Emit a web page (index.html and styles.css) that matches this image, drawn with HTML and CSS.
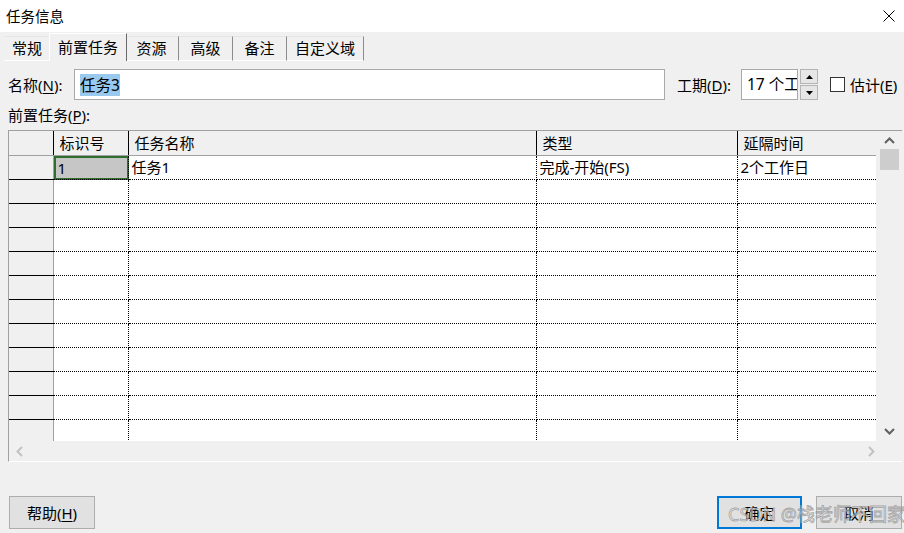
FILE: index.html
```html
<!DOCTYPE html>
<html lang="zh-CN">
<head>
    <meta charset="UTF-8">
    <title>任务信息</title>
    <link rel="stylesheet" href="styles.css">
</head>
<body>
    <div class="titlebar">
        <span class="title">任务信息</span>
        <svg class="close-icon" width="12" height="12" viewBox="0 0 12 12">
            <path d="M0.5 0.5 L11.5 11.5 M11.5 0.5 L0.5 11.5" stroke="#000" stroke-width="1" fill="none"/>
        </svg>
    </div>

    <div class="tabs">
        <div class="tab">常规</div>
        <div class="tab active">前置任务</div>
        <div class="tab">资源</div>
        <div class="tab">高级</div>
        <div class="tab">备注</div>
        <div class="tab">自定义域</div>
    </div>

    <div class="name-row">
        <span class="field-label">名称(<u>N</u>):</span>
        <div class="name-input"><span class="sel">任务3</span></div>
        <span class="dur-label">工期(<u>D</u>):</span>
        <div class="dur-input">17 个工作日</div>
        <div class="spin">
            <div class="spin-btn">
                <svg width="7" height="4" viewBox="0 0 7 4"><path d="M0 4 L3.5 0 L7 4 Z" fill="#000"/></svg>
            </div>
            <div class="spin-btn">
                <svg width="7" height="4" viewBox="0 0 7 4"><path d="M0 0 L3.5 4 L7 0 Z" fill="#000"/></svg>
            </div>
        </div>
        <span class="checkbox"></span>
        <span class="check-label">估计(<u>E</u>)</span>
    </div>

    <div class="grid-label">前置任务(<u>P</u>):</div>

    <div class="grid-box">
        <div class="grid-main">
            <div class="table-wrap">
                <table class="pred-table">
                    <colgroup>
                        <col class="c-row">
                        <col class="c-id">
                        <col class="c-name">
                        <col class="c-type">
                        <col class="c-lag">
                    </colgroup>
                    <thead>
                        <tr>
                            <th class="row-head"></th>
                            <th>标识号</th>
                            <th>任务名称</th>
                            <th>类型</th>
                            <th>延隔时间</th>
                        </tr>
                    </thead>
                    <tbody id="rows">
                        <tr>
                            <td class="row-head"></td>
                            <td class="current"><div class="cell-focus">1</div></td>
                            <td>任务1</td>
                            <td>完成-开始(FS)</td>
                            <td>2个工作日</td>
                        </tr>
                    </tbody>
                </table>
            </div>
            <div class="vscroll">
                <svg width="11" height="7" viewBox="0 0 11 7"><path d="M1 6 L5.5 1.5 L10 6" stroke="#606060" stroke-width="2" fill="none"/></svg>
                <div class="thumb"></div>
                <div class="vspace"></div>
                <svg width="11" height="7" viewBox="0 0 11 7"><path d="M1 1 L5.5 5.5 L10 1" stroke="#606060" stroke-width="2" fill="none"/></svg>
            </div>
        </div>
        <div class="hscroll">
            <svg width="7" height="11" viewBox="0 0 7 11"><path d="M6 1 L1.5 5.5 L6 10" stroke="#c2c2c2" stroke-width="2" fill="none"/></svg>
            <svg width="7" height="11" viewBox="0 0 7 11"><path d="M1 1 L5.5 5.5 L1 10" stroke="#c2c2c2" stroke-width="2" fill="none"/></svg>
        </div>
    </div>

    <div class="footer">
        <button class="btn">帮助(<u>H</u>)</button>
        <div class="btn-group">
            <button class="btn default">确定</button>
            <button class="btn">取消</button>
        </div>
    </div>

    <div class="watermark">CSDN @栈老师不回家</div>

    <script>
        // 补齐空行
        const rows = document.getElementById('rows');
        for (let i = 0; i < 11; i++) {
            const tr = document.createElement('tr');
            tr.innerHTML = '<td class="row-head"></td><td></td><td></td><td></td><td></td>';
            rows.appendChild(tr);
        }
    </script>
</body>
</html>
```

FILE: styles.css
```css
* {
    box-sizing: border-box;
}
html, body {
    margin: 0;
    padding: 0;
}
body {
    width: 904px;
    height: 533px;
    overflow: hidden;
    position: relative;
    background-color: #f0f0f0;
    font-family: "Noto Sans", "Noto Sans CJK SC", sans-serif;
    font-size: 15px;
    color: #000;
}
u {
    text-underline-offset: 2px;
}
.titlebar {
    height: 32px;
    background-color: #fff;
    display: flex;
    align-items: center;
    justify-content: space-between;
    padding: 0 9px 0 6px;
}
.title {
    font-size: 14.5px;
    line-height: 20px;
}
.tabs {
    display: flex;
    align-items: flex-end;
    height: 29px;
    padding-left: 4px;
}
.tab {
    height: 25px;
    line-height: 23px;
    padding: 0 8px;
    text-align: center;
    border-right: 1px solid #8c8c8c;
    border-top: 1px solid #e6e6e6;
    border-bottom: 1px solid #fff;
}
.tab + .tab {
    min-width: 54px;
}
.tab.active {
    position: relative;
    z-index: 1;
    height: 28px;
    line-height: 26px;
    margin: 0 -2px;
    padding: 0 8px;
    border-left: 1px solid #fff;
    border-top: 1px solid #fff;
    border-right: 1px solid #696969;
    border-bottom: none;
    background-color: #f0f0f0;
}
.name-row {
    display: flex;
    align-items: center;
    height: 31px;
    margin-top: 8px;
    padding-left: 8px;
}
.field-label {
    width: 66px;
}
.name-input {
    width: 591px;
    height: 31px;
    border: 1px solid #a9a9a9;
    background-color: #fff;
    padding-left: 5px;
    display: flex;
    align-items: center;
    font-size: 15.5px;
}
.sel {
    background-color: #99c9ef;
    line-height: 22px;
}
.dur-label {
    margin-left: 12px;
    width: 64px;
}
.dur-input {
    width: 57px;
    height: 31px;
    border: 1px solid #a9a9a9;
    background-color: #fff;
    padding-left: 5px;
    line-height: 29px;
    white-space: nowrap;
    overflow: hidden;
    font-size: 15.5px;
}
.spin {
    display: flex;
    flex-direction: column;
    gap: 1px;
    width: 18px;
    height: 31px;
    margin-left: 2px;
}
.spin-btn {
    flex: 1;
    border: 1px solid #b4b4b4;
    background-color: #e6e6e6;
    display: flex;
    align-items: center;
    justify-content: center;
}
.checkbox {
    width: 15px;
    height: 15px;
    margin-left: 12px;
    border: 1px solid #333;
    background-color: #fff;
}
.check-label {
    margin-left: 5px;
}
.grid-label {
    height: 22px;
    line-height: 22px;
    margin: 4px 0 4px 8px;
}
.grid-box {
    margin-left: 8px;
    width: 894px;
    border-left: 1px solid #a0a0a0;
    border-top: 1px solid #a0a0a0;
    border-bottom: 1px solid #fff;
}
.grid-main {
    display: flex;
    height: 310px;
}
.table-wrap {
    width: 867px;
    height: 310px;
    overflow: hidden;
    background-color: #fff;
}
.pred-table {
    table-layout: fixed;
    border-collapse: collapse;
    width: 867px;
}
.c-row { width: 44px; }
.c-id { width: 75px; }
.c-name { width: 408px; }
.c-type { width: 201px; }
.c-lag { width: 139px; }
.pred-table th {
    height: 24px;
    padding: 2px 0 0 6px;
    text-align: left;
    font-weight: normal;
    background-color: #f0f0f0;
    border-right: 1px solid #000;
    border-bottom: 1px solid #a0a0a0;
    line-height: 21px;
}
.pred-table td {
    height: 24px;
    padding: 0 0 0 3px;
    border-right: 1px dotted #000;
    border-bottom: 1px dotted #000;
    line-height: 22px;
    white-space: nowrap;
}
.pred-table td:last-child {
    border-right: 1px solid #a0a0a0;
}
.pred-table td.row-head {
    background-color: #f0f0f0;
    border-right: 1px solid #a0a0a0;
    border-bottom: 1px solid #000;
}
.pred-table td.current {
    padding: 0;
}
.cell-focus {
    height: 24px;
    margin: 0 -1px -1px 0;
    padding-left: 2px;
    line-height: 20px;
    background-color: #c6c6c6;
    border: 2px solid #2f6e2f;
}
.vscroll {
    width: 26px;
    display: flex;
    flex-direction: column;
    align-items: center;
    background-color: #f0f0f0;
    padding: 6px 0 6px;
}
.thumb {
    width: 19px;
    height: 21px;
    margin-top: 5px;
    background-color: #cdcdcd;
}
.vspace {
    flex: 1;
}
.hscroll {
    height: 20px;
    display: flex;
    align-items: center;
    justify-content: space-between;
    padding: 0 27px 0 7px;
    background-color: #f0f0f0;
}
.footer {
    display: flex;
    justify-content: space-between;
    margin-top: 34px;
    padding: 0 2px 0 9px;
}
.btn-group {
    display: flex;
    gap: 14px;
}
.btn {
    width: 86px;
    height: 33px;
    background-color: #e1e1e1;
    border: 1px solid #adadad;
    font-family: inherit;
    font-size: 15px;
    color: #000;
    padding: 0;
}
.btn.default {
    width: 85px;
    border: 2px solid #0078d7;
}
.watermark {
    position: absolute;
    left: 728px;
    top: 502px;
    font-size: 18px;
    line-height: 24px;
    color: rgba(255, 255, 255, 0.5);
    -webkit-text-stroke: 0.8px rgba(130, 130, 130, 0.7);
    white-space: nowrap;
    pointer-events: none;
}
```
